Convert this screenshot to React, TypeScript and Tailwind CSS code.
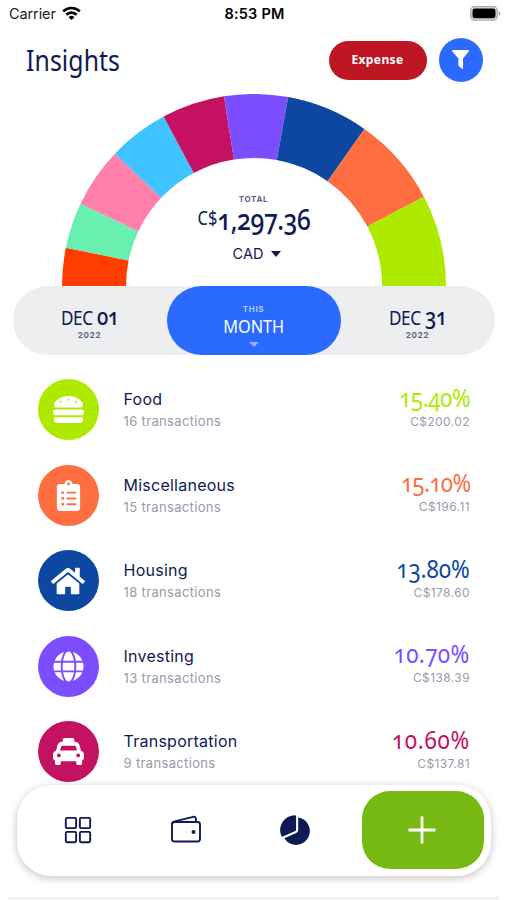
import React from 'react';
import { FaClipboardList, FaGlobe, FaHamburger, FaHome, FaTaxi } from 'react-icons/fa';
import { IoGridOutline, IoPieChart } from 'react-icons/io5';

interface Category {
  name: string;
  count: number;
  percent: string;
  amount: string;
  bg: string;
  text: string;
  percentTracking: string;
  icon: React.ReactNode;
}

const categories: Category[] = [
  {
    name: 'Food',
    count: 16,
    percent: '15.40%',
    amount: 'C$200.02',
    bg: 'bg-[#aeea00]',
    text: 'text-[#aeea00]',
    percentTracking: 'tracking-[-0.5px]',
    icon: <FaHamburger size={31} />,
  },
  {
    name: 'Miscellaneous',
    count: 15,
    percent: '15.10%',
    amount: 'C$196.11',
    bg: 'bg-[#ff6e40]',
    text: 'text-[#ff6e40]',
    percentTracking: 'tracking-[-0.8px]',
    icon: <FaClipboardList size={31} />,
  },
  {
    name: 'Housing',
    count: 18,
    percent: '13.80%',
    amount: 'C$178.60',
    bg: 'bg-[#0d47a1]',
    text: 'text-[#0d47a1]',
    percentTracking: 'tracking-[-0.1px]',
    icon: <FaHome size={34} />,
  },
  {
    name: 'Investing',
    count: 13,
    percent: '10.70%',
    amount: 'C$138.39',
    bg: 'bg-[#7c4dff]',
    text: 'text-[#7c4dff]',
    percentTracking: 'tracking-[0.4px]',
    icon: <FaGlobe size={31} />,
  },
  {
    name: 'Transportation',
    count: 9,
    percent: '10.60%',
    amount: 'C$137.81',
    bg: 'bg-[#c51162]',
    text: 'text-[#c51162]',
    percentTracking: 'tracking-[0.8px]',
    icon: <FaTaxi size={31} />,
  },
];

// clockwise from the left end of the arc
const slices = [
  { value: 6.4, color: '#ff3d00' },
  { value: 7.7, color: '#69f0ae' },
  { value: 10.1, color: '#ff80ab' },
  { value: 10.2, color: '#40c4ff' },
  { value: 10.6, color: '#c51162' },
  { value: 10.7, color: '#7c4dff' },
  { value: 13.8, color: '#0d47a1' },
  { value: 15.1, color: '#ff6e40' },
  { value: 15.4, color: '#aeea00' },
];

const OUTER = 192;
const INNER = 128;

function slicePath(from: number, to: number) {
  const point = (r: number, pct: number) => {
    const a = Math.PI * (1 - pct / 100);
    return `${(OUTER + r * Math.cos(a)).toFixed(2)} ${(OUTER - r * Math.sin(a)).toFixed(2)}`;
  };
  return `M${point(OUTER, from)}A${OUTER} ${OUTER} 0 0 1 ${point(OUTER, to)}L${point(INNER, to)}A${INNER} ${INNER} 0 0 0 ${point(INNER, from)}Z`;
}

function StatusBar() {
  return (
    <div className="grid h-[28px] grid-cols-3 items-center pr-[6px] pl-[9px] text-[14.5px] text-black">
      <div className="flex items-center gap-[6px]">
        <span className="tracking-[-0.1px] text-[#222]">Carrier</span>
        <svg className="mt-[-2px]" width="19" height="15" viewBox="0 0 19 15" fill="none" stroke="#000" strokeWidth="2.7">
          <path d="M1.2 5.4a11.8 11.8 0 0 1 16.6 0" />
          <path d="M4.3 8.7a7.4 7.4 0 0 1 10.4 0" />
          <path d="M9.5 14 6.6 11.2a4.1 4.1 0 0 1 5.8 0Z" fill="#000" stroke="none" />
        </svg>
      </div>
      <div className="pr-px text-center font-semibold tracking-[0.2px] whitespace-nowrap">8:53 PM</div>
      <div className="flex justify-end">
        <svg className="mt-[-2px]" width="31" height="15" viewBox="0 0 31 15">
          <rect x="0.7" y="0.7" width="26.6" height="13.4" rx="4" fill="#ddd" stroke="#aaa" strokeWidth="1.3" />
          <rect x="2.5" y="2.5" width="23" height="9.8" rx="2.4" fill="#000" />
          <path d="M28.8 5.2c2 .8 2 3.6 0 4.4z" fill="#999" />
        </svg>
      </div>
    </div>
  );
}

function Header() {
  return (
    <header className="mt-[10px] flex h-11 items-center pr-[24.5px] pl-[25px]">
      <div className="flex-1 pt-px">
        <h1 className="ml-px inline-block origin-left scale-x-[0.84] font-['Noto_Sans',sans-serif] text-[29.5px] leading-none tracking-[0.1px]">
          Insights
        </h1>
      </div>
      <button className="h-[39px] w-[98px] rounded-full bg-[#be1622] font-['Noto_Sans',sans-serif] text-[12px] font-bold tracking-[0.4px] text-white">
        Expense
      </button>
      <button className="ml-3 flex size-11 items-center justify-center rounded-full bg-[#2a6aff] text-white">
        <svg className="mt-[-1px]" width="17" height="19" viewBox="0 0 17 19" fill="currentColor">
          <path d="M1 0h15c.8 0 1.2.8.7 1.4L11 8.4v9.6c0 .8-.7 1.1-1.3.6L7 16.3c-.4-.3-.6-.7-.6-1.2V8.4L.3 1.4C-.2.8.2 0 1 0Z" />
        </svg>
      </button>
    </header>
  );
}

function Summary() {
  let start = 0;
  return (
    <section className="relative mx-auto mt-3 h-[192px] w-[384px]">
      <svg width="384" height="192" viewBox="0 0 384 192">
        {slices.map((slice) => {
          const from = start;
          start += slice.value;
          return <path key={slice.color} d={slicePath(from, start)} fill={slice.color} />;
        })}
      </svg>
      <div className="absolute inset-x-0 top-[100px] flex flex-col items-center">
        <p className="text-[8px] leading-[10px] font-bold tracking-[0.7px] text-[#5d6285]">TOTAL</p>
        <p className="mt-[-1px] flex h-8 scale-x-[0.87] items-start font-['Noto_Sans',sans-serif] leading-8 oldstyle-nums">
          <span className="mt-[-1px] text-[19px]">C$</span>
          <span className="text-[28.5px] font-medium tracking-[-0.5px]">1,297.36</span>
        </p>
        <p className="mt-[9px] ml-[7px] flex items-center gap-2 text-[14.5px] leading-5">
          CAD
          <svg width="10" height="6" viewBox="0 0 10 6" fill="currentColor">
            <path d="M0 0h10L5 6z" />
          </svg>
        </p>
      </div>
    </section>
  );
}

function DateCell({ day }: { day: string }) {
  return (
    <div className="flex flex-1 flex-col items-center pt-[18px]">
      <p className="h-[26px] scale-x-[0.88] font-['Noto_Sans',sans-serif] text-[19.5px] leading-[24px] tracking-[-0.4px] whitespace-nowrap oldstyle-nums">
        DEC <span className="text-[23px] font-medium">{day}</span>
      </p>
      <p className="text-[8px] leading-[10px] font-bold tracking-[0.7px] text-[#5d6285]">2022</p>
    </div>
  );
}

function PeriodPicker() {
  return (
    <section className="mx-auto flex h-[69px] w-[482px] rounded-full bg-[#eceeef]">
      <DateCell day="01" />
      <button className="flex w-[174px] flex-col items-center rounded-full bg-[#2a6aff] pt-[18px] text-white">
        <span className="text-[8px] leading-[10px] font-semibold tracking-[0.7px] text-[#bfd2ff]">THIS</span>
        <span className="scale-x-[0.88] font-['Noto_Sans',sans-serif] text-[18.5px] leading-6">MONTH</span>
        <svg className="mt-[4px]" width="10" height="5" viewBox="0 0 10 5" fill="#94b4ff">
          <path d="M0 0h10L5 5z" />
        </svg>
      </button>
      <DateCell day="31" />
    </section>
  );
}

function CategoryRow({ category }: { category: Category }) {
  return (
    <li className="flex h-[61px] items-center">
      <div className={`flex size-[61px] items-center justify-center rounded-full text-white ${category.bg}`}>
        {category.icon}
      </div>
      <div className="ml-[25px] flex-1">
        <p className="mt-[-1px] text-[16px] leading-6 tracking-[0.25px]">{category.name}</p>
        <p className="text-[13px] leading-5 tracking-[0.35px] text-[#989bab]">{category.count} transactions</p>
      </div>
      <div className="text-right">
        <p
          className={`origin-right scale-x-[0.9] font-['Noto_Sans',sans-serif] text-[25px] leading-[21px] oldstyle-nums ${category.text} ${category.percentTracking}`}
        >
          {category.percent}
        </p>
        <p className="mt-[5px] mb-[2px] text-[12px] leading-[18px] tracking-[0.4px] text-[#989bab]">{category.amount}</p>
      </div>
    </li>
  );
}

function TabBar() {
  return (
    <nav className="absolute top-[785px] left-[17px] flex h-[91px] w-[474px] items-center rounded-[34px] bg-white pr-[7px] pb-px shadow-[0_2px_9px_rgba(0,0,0,0.24)]">
      <div className="flex flex-1 items-center justify-between pr-[50px] pl-[46px]">
        <IoGridOutline size={30} />
        <svg className="mt-[-2px]" width="32" height="28" viewBox="0 0 32 28" fill="none" stroke="currentColor" strokeWidth="1.9" strokeLinejoin="round">
          <rect x="2" y="7" width="28" height="19.5" rx="2.5" />
          <path d="M2.2 9c0-1.5.8-2.3 2.3-2.6L23.2 1.8c1.5-.3 2.4.3 2.6 1.7l.5 3.5" />
          <circle cx="23.5" cy="17" r="2" fill="currentColor" stroke="none" />
        </svg>
        <IoPieChart size={34} />
      </div>
      <button className="flex h-[78px] w-[122px] items-center justify-center rounded-[28px] bg-[#76b913] pr-[2px]">
        <svg width="28" height="28" viewBox="0 0 28 28" stroke="#fff" strokeWidth="2.8">
          <path d="M14 .5v27M.5 14h27" />
        </svg>
      </button>
    </nav>
  );
}

export default function App() {
  return (
    <div className="relative h-[900px] w-[507px] overflow-hidden bg-white font-['Inter','Liberation_Sans',sans-serif] text-[#0f1a55]">
      <StatusBar />
      <Header />
      <Summary />
      <PeriodPicker />
      <ul className="mt-[24px] flex flex-col gap-[24.6px] pr-[37px] pl-[37.5px]">
        {categories.map((category) => (
          <CategoryRow key={category.name} category={category} />
        ))}
      </ul>
      <TabBar />
      <div className="absolute inset-x-2 bottom-0 h-[3px] bg-[#f3f3f3]" />
    </div>
  );
}
